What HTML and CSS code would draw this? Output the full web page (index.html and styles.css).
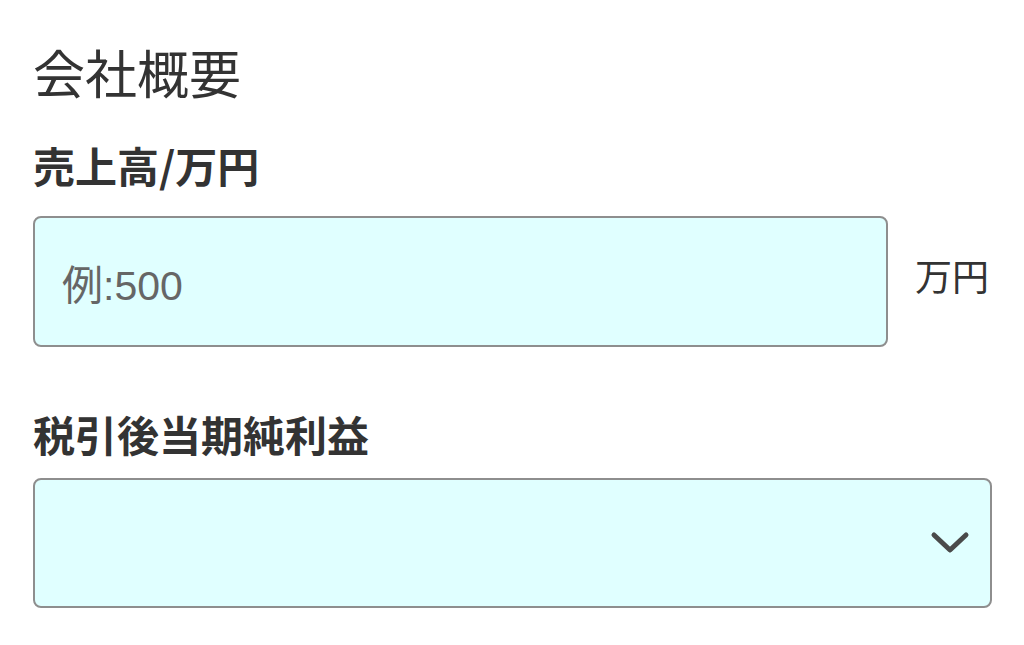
FILE: index.html
```html
<!DOCTYPE html>
<html lang="ja">
<head>
<meta charset="utf-8">
<link rel="stylesheet" href="styles.css">
</head>
<body>
<div class="page">
  <h1 class="title">会社概要</h1>
  <div class="field">
    <div class="label">売上高/万円</div>
    <div class="row">
      <div class="input"><span class="placeholder">例:500</span></div>
      <span class="unit">万円</span>
    </div>
  </div>
  <div class="field field2">
    <div class="label">税引後当期純利益</div>
    <div class="select">
      <svg class="chev" width="40" height="26" viewBox="0 0 40 26"><path d="M4 5 L20 20 L36 5" fill="none" stroke="#4a4a4a" stroke-width="5" stroke-linecap="round" stroke-linejoin="round"/></svg>
    </div>
  </div>
</div>
</body>
</html>
```
FILE: styles.css
```css
html, body { margin: 0; padding: 0; background: #fff; }
body { font-family: "Noto Sans CJK JP", "Noto Sans", sans-serif; color: #333; }
.page { padding: 42px 33px 0 33px; }
.title { margin: 0; font-size: 52px; font-weight: 400; line-height: 60px; color: #333; }
.field { margin-top: 38px; }
.field2 { margin-top: 62px; }
.label { font-size: 42px; font-weight: 700; line-height: 50px; color: #333; }
.row { display: flex; align-items: center; margin-top: 26px; }
.input { box-sizing: border-box; width: 855px; height: 131px; background: #e0ffff; border: 2px solid #8e8e8e; border-radius: 8px; display: flex; align-items: center; padding-left: 27px; }
.placeholder { font-family: "Liberation Sans", "Noto Sans CJK JP", sans-serif; font-size: 41px; color: #666; }
.unit { margin-left: 27px; padding-bottom: 14px; font-size: 37px; color: #333; }
.select { box-sizing: border-box; margin-top: 19px; width: 959px; height: 130px; background: #e0ffff; border: 2px solid #8e8e8e; border-radius: 8px; display: flex; align-items: center; justify-content: flex-end; padding-right: 20px; }
.chev { display: block; }
```
